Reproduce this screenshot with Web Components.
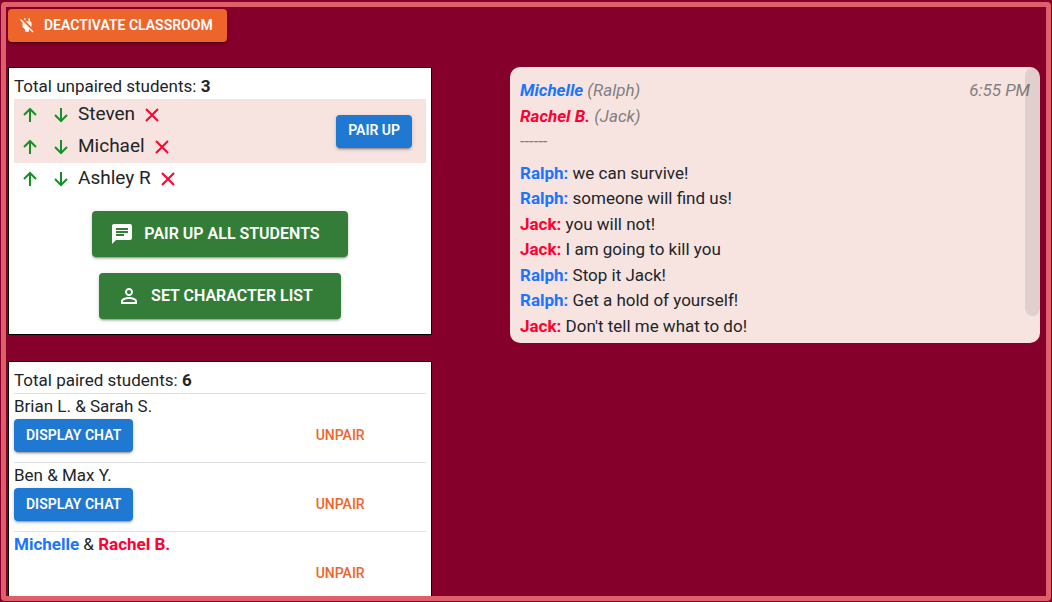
<!DOCTYPE html>
<html lang="en">
<head>
<meta charset="utf-8">
<meta name="viewport" content="width=device-width, initial-scale=1">
<title>Classroom</title>
<style>
  body {
    margin: 0;
    background: #85002b;
    color: #212529;
    font: 17px/1.5 Roboto, "Liberation Sans", sans-serif;
    --blue: #1f78d1;
    --green: #337d39;
    --orange: #ee652b;
    --blush: #f7e4e1;
    --player-a: #1a75ff;
    --player-b: #ff0030;
  }
</style>
</head>
<body>
<classroom-page>
  <action-button slot="toolbar" tone="orange" icon="power">Deactivate classroom</action-button>

  <list-card label="Total unpaired students:" count="3">
    <pairing-group>
      <student-row name="Steven"></student-row>
      <student-row name="Michael"></student-row>
      <action-button slot="action" tone="blue">Pair up</action-button>
    </pairing-group>
    <student-row name="Ashley R"></student-row>
    <action-stack>
      <action-button tone="green" size="large" icon="chat">Pair up all students</action-button>
      <action-button tone="green" size="large" icon="person">Set character list</action-button>
    </action-stack>
  </list-card>

  <list-card label="Total paired students:" count="6">
    <pair-row first="Brian L." second="Sarah S."></pair-row>
    <pair-row first="Ben" second="Max Y."></pair-row>
    <pair-row first="Michelle" second="Rachel B." open></pair-row>
  </list-card>

  <chat-log slot="chat" time="6:55 PM">
    <chat-player slot="players" side="a" name="Michelle" role-name="Ralph"></chat-player>
    <chat-player slot="players" side="b" name="Rachel B." role-name="Jack"></chat-player>
    <chat-line side="a" who="Ralph">we can survive!</chat-line>
    <chat-line side="a" who="Ralph">someone will find us!</chat-line>
    <chat-line side="b" who="Jack">you will not!</chat-line>
    <chat-line side="b" who="Jack">I am going to kill you</chat-line>
    <chat-line side="a" who="Ralph">Stop it Jack!</chat-line>
    <chat-line side="a" who="Ralph">Get a hold of yourself!</chat-line>
    <chat-line side="b" who="Jack">Don't tell me what to do!</chat-line>
  </chat-log>
</classroom-page>

<script>
const ICONS = {
  power: 'M18 14.49V9c0-1-1.01-2.01-2-2V3h-2v4h-3.88l7.69 7.7.19-.21zm-1.76 1.77L7.2 7.2l-.01.01L3.98 4 2.71 5.25l3.36 3.36C6.04 8.74 6 8.87 6 9v5.48L9.5 18v3h5v-3l.48-.48L19.45 22l1.26-1.28-4.47-4.46zM8 3h2v3.2l-2-2z',
  chat: 'M20 2H4c-1.1 0-1.99.9-1.99 2L2 22l4-4h14c1.1 0 2-.9 2-2V4c0-1.1-.9-2-2-2zM6 9h12v2H6V9zm8 5H6v-2h8v2zm4-6H6V6h12v2z',
  person: 'M12 5.9c1.16 0 2.1.94 2.1 2.1s-.94 2.1-2.1 2.1S9.9 9.16 9.9 8s.94-2.1 2.1-2.1m0 9c2.97 0 6.1 1.46 6.1 2.1v1.1H5.9V17c0-.64 3.13-2.1 6.1-2.1M12 4C9.79 4 8 5.79 8 8s1.79 4 4 4 4-1.79 4-4-1.79-4-4-4zm0 9c-2.67 0-8 1.34-8 4v3h16v-3c0-2.66-5.33-4-8-4z'
};

class Base extends HTMLElement {
  connectedCallback() {
    if (this.shadowRoot) return;
    this.attachShadow({ mode: 'open' }).innerHTML = this.render();
  }
}

customElements.define('classroom-page', class extends Base {
  render() {
    return `
    <style>
      :host {
        display: flex; flex-direction: column; box-sizing: border-box;
        height: 100vh; padding: 2px 1px 1px;
      }
      .frame {
        flex: 1; min-height: 0; overflow: hidden;
        border: 5px solid #df5f6b; border-radius: 4px;
        padding: 2px 6px 0 2px;
      }
      .toolbar { display: flex; margin-bottom: 25px; }
      .columns {
        display: grid; grid-template-columns: 4fr 5fr; column-gap: 78px;
        align-items: start;
      }
      .lists { display: flex; flex-direction: column; gap: 26px; }
    </style>
    <main class="frame">
      <div class="toolbar"><slot name="toolbar"></slot></div>
      <div class="columns">
        <div class="lists"><slot></slot></div>
        <slot name="chat"></slot>
      </div>
    </main>`;
  }
});

customElements.define('action-button', class extends Base {
  render() {
    const icon = ICONS[this.getAttribute('icon')];
    return `
    <style>
      :host { display: inline-flex; }
      button {
        display: inline-flex; align-items: center; gap: 8px; box-sizing: border-box;
        min-height: 33px; padding: 0 12px 2px;
        border: 0; border-radius: 4px; color: #fff; background: var(--blue);
        font: 600 14px/24px Roboto, "Liberation Sans", sans-serif;
        text-transform: uppercase; white-space: nowrap; cursor: pointer;
        box-shadow: 0 3px 1px -2px rgba(0,0,0,.2), 0 2px 2px rgba(0,0,0,.14), 0 1px 5px rgba(0,0,0,.12);
      }
      svg { width: 18px; height: 18px; fill: currentColor; }
      :host([tone="orange"]) button { background: var(--orange); padding: 0 14px 2px 10px; }
      :host([tone="green"]) button { background: var(--green); }
      :host([tone="text"]) button { background: none; box-shadow: none; color: var(--orange); font-weight: 500; }
      :host([size="large"]) button { min-height: 46px; padding: 0 28px 0 18px; gap: 10px; font-size: 16px; }
      :host([size="large"]) svg { width: 24px; height: 24px; }
    </style>
    <button type="button">${icon ? `<svg viewBox="0 0 24 24" aria-hidden="true"><path d="${icon}"/></svg>` : ''}<slot></slot></button>`;
  }
});

customElements.define('list-card', class extends Base {
  render() {
    return `
    <style>
      :host { display: block; background: #fff; border: 1px solid #000; padding: 5px; }
      h2 { margin: 0; font-size: 17px; font-weight: 400; line-height: 26px; }
      b { font-weight: 700; }
    </style>
    <h2>${this.getAttribute('label')} <b>${this.getAttribute('count')}</b></h2>
    <slot></slot>`;
  }
});

customElements.define('pairing-group', class extends Base {
  render() {
    return `
    <style>
      :host {
        display: flex; align-items: center; justify-content: space-between;
        background: var(--blush); padding-right: 14px;
      }
    </style>
    <div><slot></slot></div>
    <slot name="action"></slot>`;
  }
});

customElements.define('student-row', class extends Base {
  render() {
    const name = this.getAttribute('name');
    return `
    <style>
      :host { display: flex; align-items: center; box-sizing: border-box; height: 32px; padding: 0 0 2px 8px; font-size: 19px; line-height: 28px; }
      button { display: flex; padding: 0; border: 0; background: none; cursor: pointer; }
      svg { width: 16px; height: 16px; fill: none; stroke: currentColor; stroke-width: 2; }
      .move { color: #149126; margin: 2px 15px 0 0; }
      .move + .move { margin-right: 9px; }
      .remove { color: var(--player-b); margin: 2px 0 0 9px; }
    </style>
    <button class="move" type="button" aria-label="Move ${name} up"><svg viewBox="0 0 16 16"><path d="M8 15V2M2 8l6-6 6 6"/></svg></button>
    <button class="move" type="button" aria-label="Move ${name} down"><svg viewBox="0 0 16 16"><path d="M8 1v13M2 8l6 6 6-6"/></svg></button>
    <span>${name}</span>
    <button class="remove" type="button" aria-label="Remove ${name}"><svg viewBox="0 0 16 16"><path d="M2 2l12 12M14 2L2 14"/></svg></button>`;
  }
});

customElements.define('action-stack', class extends Base {
  render() {
    return `
    <style>
      :host { display: flex; flex-direction: column; align-items: center; gap: 16px; padding: 16px 0 10px; }
    </style>
    <slot></slot>`;
  }
});

customElements.define('pair-row', class extends Base {
  render() {
    const open = this.hasAttribute('open');
    return `
    <style>
      :host { display: block; border-top: 1px solid #dee2e6; padding-bottom: 10px; }
      p { margin: 0; line-height: 25px; }
      .actions { display: grid; grid-template-columns: 7fr 5fr; min-height: 33px; }
      .unpair { grid-column: 2; justify-self: center; }
      :host([open]) b:first-child { color: var(--player-a); }
      :host([open]) b:last-child { color: var(--player-b); }
      :host(:not([open])) b { font-weight: 400; }
    </style>
    <p><b>${this.getAttribute('first')}</b> &amp; <b>${this.getAttribute('second')}</b></p>
    <div class="actions">
      ${open ? '' : '<action-button tone="blue">Display chat</action-button>'}
      <action-button class="unpair" tone="text">Unpair</action-button>
    </div>`;
  }
});

customElements.define('chat-log', class extends Base {
  render() {
    return `
    <style>
      :host {
        display: block; position: relative; box-sizing: border-box;
        background: var(--blush); border-radius: 10px; padding: 11px 10px 4px;
      }
      header { display: flex; justify-content: space-between; font-style: italic; color: #808080; margin-bottom: 6px; }
      .thumb {
        position: absolute; top: 1px; right: 0; width: 15px; height: 90%;
        border-radius: 8px; background: rgba(0,0,0,.09);
      }
    </style>
    <header>
      <div><slot name="players"></slot><div>------</div></div>
      <time>${this.getAttribute('time')}</time>
    </header>
    <slot></slot>
    <div class="thumb"></div>`;
  }
});

customElements.define('chat-player', class extends Base {
  render() {
    return `
    <style>
      :host { display: block; }
      b { color: var(--player-a); }
      :host([side="b"]) b { color: var(--player-b); }
    </style>
    <b>${this.getAttribute('name')}</b> (${this.getAttribute('role-name')})`;
  }
});

customElements.define('chat-line', class extends Base {
  render() {
    return `
    <style>
      :host { display: block; }
      b { color: var(--player-a); }
      :host([side="b"]) b { color: var(--player-b); }
    </style>
    <b>${this.getAttribute('who')}:</b> <slot></slot>`;
  }
});
</script>
</body>
</html>
